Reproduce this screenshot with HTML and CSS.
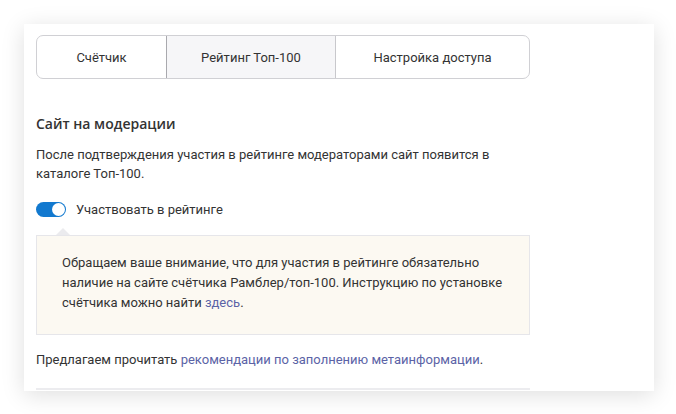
FILE: index.html
```html
<!DOCTYPE html>
<html lang="ru">
<head>
<meta charset="utf-8">
<link rel="stylesheet" href="styles.css">
</head>
<body>
<div class="card">
  <div class="tabs">
    <div class="tab tab-1">Счётчик</div>
    <div class="tab tab-2 active">Рейтинг Топ-100</div>
    <div class="tab tab-3">Настройка доступа</div>
  </div>
  <h2 class="title">Сайт на модерации</h2>
  <p class="text">После подтверждения участия в рейтинге модераторами сайт появится в каталоге Топ-100.</p>
  <label class="toggle-row">
    <span class="toggle"><span class="knob"></span></span>
    <span class="toggle-label">Участвовать в рейтинге</span>
  </label>
  <div class="notice">
    <p>Обращаем ваше внимание, что для участия в рейтинге обязательно наличие на сайте счётчика Рамблер/топ-100. Инструкцию по установке счётчика можно найти <a href="#">здесь</a>.</p>
  </div>
  <p class="text bottom">Предлагаем прочитать <a href="#">рекомендации по заполнению метаинформации</a>.</p>
  <div class="divider"></div>
</div>
</body>
</html>
```
FILE: styles.css
```css
html, body {
  margin: 0;
  padding: 0;
  background: #fff;
  height: 414px;
  overflow: hidden;
}
body {
  font-family: Roboto, "Liberation Sans", sans-serif;
  color: #333;
  font-size: 13px;
}
.card {
  margin: 24px 0 0 24px;
  width: 606px;
  height: 356px;
  padding: 11px 12px 0 12px;
  background: #fff;
  box-shadow: 0 4px 22px rgba(0, 0, 0, 0.13);
  overflow: hidden;
}
.tabs {
  width: 494px;
  height: 44px;
  display: grid;
  grid-template-columns: 129px 170px 1fr;
  border: 1px solid #d0d0d4;
  border-radius: 7px;
  box-sizing: border-box;
  overflow: hidden;
}
.tab {
  display: flex;
  align-items: center;
  justify-content: center;
  font-size: 13px;
  color: #333;
}
.tab-2 {
  background: #f6f6f8;
  border-left: 1px solid #a9a9ae;
  border-right: 1px solid #c8c8cc;
}
.title {
  margin: 36px 0 0;
  font-family: "Open Sans", sans-serif;
  font-weight: 600;
  font-size: 14px;
  line-height: 18px;
  color: #333;
}
.text {
  margin: 12px 0 0;
  width: 494px;
  line-height: 19px;
}
.toggle-row {
  display: flex;
  align-items: center;
  gap: 10px;
  margin-top: 18px;
  height: 16px;
}
.toggle {
  width: 30px;
  height: 15px;
  border-radius: 8px;
  background: #1279cf;
  position: relative;
  flex: none;
}
.knob {
  position: absolute;
  right: 1px;
  top: 1px;
  width: 13px;
  height: 13px;
  border-radius: 50%;
  background: #fff;
}
.notice {
  position: relative;
  margin-top: 18px;
  width: 494px;
  height: 100px;
  box-sizing: border-box;
  background: #fcf9f2;
  border: 1px solid #e6e6ea;
  padding: 17px 26px 0 25px;
}
.notice::before {
  content: "";
  position: absolute;
  top: -8px;
  left: 19px;
  border-left: 7px solid transparent;
  border-right: 7px solid transparent;
  border-bottom: 7px solid #ebebee;
}
.notice p {
  margin: 0;
  line-height: 20px;
}
a {
  color: #5b63a6;
  text-decoration: none;
}
.bottom {
  margin-top: 15px;
}
.divider {
  margin-top: 19px;
  width: 494px;
  height: 2px;
  background: #ececef;
}
```
